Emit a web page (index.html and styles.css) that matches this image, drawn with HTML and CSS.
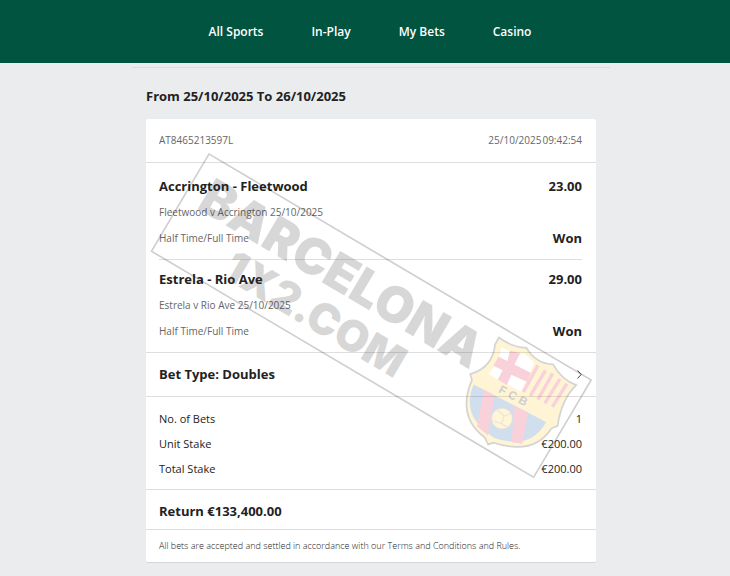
FILE: index.html
```
<!DOCTYPE html>
<html lang="en">
<head>
  <meta charset="utf-8">
  <title>My Bets</title>
  <link rel="stylesheet" href="styles.css">
</head>
<body>
  <header class="header">
    <nav class="nav">
      <a href="#">All Sports</a>
      <a href="#">In-Play</a>
      <a href="#">My Bets</a>
      <a href="#">Casino</a>
    </nav>
  </header>
  <div class="page">
    <main class="content">
      <h1 class="range">From 25/10/2025 To 26/10/2025</h1>
      <section class="slip">
        <div class="row slip-ref">
          <span>AT8465213597L</span>
          <span class="stamp"><span>25/10/2025</span><span>09:42:54</span></span>
        </div>
        <div class="selections">
          <article class="selection">
            <h2 class="row">Accrington - Fleetwood <span>23.00</span></h2>
            <p>Fleetwood v Accrington 25/10/2025</p>
            <p class="row">Half Time/Full Time <strong>Won</strong></p>
          </article>
          <article class="selection">
            <h2 class="row">Estrela - Rio Ave <span>29.00</span></h2>
            <p>Estrela v Rio Ave 25/10/2025</p>
            <p class="row">Half Time/Full Time <strong>Won</strong></p>
          </article>
        </div>
        <button class="row bet-type" type="button">
          Bet Type: Doubles
          <svg width="5" height="9" viewBox="0 0 5 9"><path d="M.5 .5 4.2 4.5 .5 8.5" fill="none" stroke="#444"/></svg>
        </button>
        <dl class="stakes">
          <div class="row"><dt>No. of Bets</dt><dd>1</dd></div>
          <div class="row"><dt>Unit Stake</dt><dd>€200.00</dd></div>
          <div class="row"><dt>Total Stake</dt><dd>€200.00</dd></div>
        </dl>
        <p class="return">Return €133,400.00</p>
        <p class="terms">All bets are accepted and settled in accordance with our Terms and Conditions and Rules.</p>

        <svg class="watermark" width="450" height="443" viewBox="0 0 450 443" aria-hidden="true">
          <g transform="translate(63 35) rotate(30.6)">
            <rect width="444" height="113" fill="none" stroke="#000" stroke-width="1.6"/>
            <text class="mark" x="16" y="53">BARCELONA</text>
            <text class="mark mark-small" x="72" y="99">1X2.COM</text>
          </g>
          <!-- club crest -->
          <g transform="translate(307 204) scale(.345)">
            <path d="M133 42Q170 70 213 72Q240 118 290 120Q315 165 357 180Q315 220 303 298L285 306Q235 385 118 347L102 352L92 332Q10 270 55 165L50 148Q115 130 122 62Z" fill="#fc2" stroke="#222" stroke-width="5"/>
            <path d="M60 178 270 287Q225 370 120 333Q20 270 60 178Z" fill="#15a"/>
            <path d="M89 193 121 210 101 325 70 300ZM178 239 218 260 201 350 170 346Z" fill="#d14"/>
            <path d="M140 70Q175 88 207 88L236 115 197 199 102 148Q135 115 140 70Z" fill="#fff"/>
            <path d="M165 80 195 88 178 120 226 145 214 170 169 150 156 180 130 164 144 137 117 124 132 98 158 110Z" fill="#d14"/>
            <path d="M246 123 204 200M268 137 224 211M289 146 246 222M310 162 266 233M330 176 288 243" fill="none" stroke="#d14" stroke-width="10"/>
            <circle cx="142" cy="277" r="30" fill="#fc3" stroke="#963" stroke-width="2"/>
            <path d="M130 252 148 270 168 262M148 270 141 292 118 284M141 292 157 302" fill="none" stroke="#963" stroke-width="3"/>
            <text class="crest-text" transform="translate(130 200) rotate(28)">F C B</text>
          </g>
        </svg>
      </section>
    </main>
  </div>
</body>
</html>
```
FILE: styles.css
```
* {
  box-sizing: border-box;
}
body {
  margin: 0;
  background-color: #ebecee;
  color: #222;
  font-family: "Segoe UI", "Open Sans", "Noto Sans", sans-serif;
  font-size: 11px;
}
h1, h2, p, dl, dd {
  margin: 0;
}
.header {
  background-color: #005440;
}
.nav {
  display: flex;
  justify-content: center;
  gap: 48px;
  padding: 20px 0;
  margin-left: 10px;
  font-size: 12px;
  line-height: 23px;
}
.nav a {
  color: #fff;
  font-weight: 600;
  text-decoration: none;
}
.page {
  padding: 4px 0 0 12px;
}
.content {
  max-width: 478px;
  margin: 0 auto;
  padding: 0 14px 13px;
  border-top: 1px solid #dcdddf;
}
.range {
  padding: 17px 0 12px;
  font-size: 13px;
  font-weight: 700;
  line-height: 22px;
}
.slip {
  position: relative;
  background-color: #fff;
  border-bottom: 1px solid #d4d5d7;
  border-radius: 2px;
}
.row {
  display: flex;
  justify-content: space-between;
  align-items: center;
}
.slip-ref {
  padding: 10px 14px 10px 13px;
  border-bottom: 1px solid #dedede;
  color: #666;
  font-size: 10px;
  line-height: 23px;
}
.stamp {
  display: flex;
  gap: 1px;
}
.selections {
  padding: 4px 14px 0 13px;
}
.selection {
  padding: 6px 0 8px;
  color: #666;
  font-size: 10px;
  line-height: 26px;
}
.selection + .selection {
  border-top: 1px solid #dedede;
}
.selection h2,
.selection strong {
  color: #222;
  font-size: 13px;
  font-weight: 700;
}
.bet-type {
  width: 100%;
  padding: 10px 14px 10px 13px;
  background: none;
  border: 1px solid #dedede;
  border-width: 1px 0;
  color: #222;
  font-family: inherit;
  font-size: 13px;
  font-weight: 700;
  line-height: 23px;
}
.stakes {
  padding: 9px 14px 8px 13px;
  line-height: 25px;
}
.return {
  padding: 10px 13px 7px;
  border: 1px solid #dedede;
  border-width: 1px 0;
  font-size: 13px;
  font-weight: 700;
  line-height: 22px;
}
.terms {
  padding: 6px 13px;
  color: #222;
  font-size: 9px;
  font-weight: 300;
  line-height: 20px;
}
.watermark {
  position: absolute;
  top: 0;
  left: 0;
  opacity: .19;
  pointer-events: none;
}
.mark {
  fill: #333;
  font-family: Inter, "Liberation Sans", sans-serif;
  font-size: 50px;
  font-weight: 900;
}
.mark-small {
  font-size: 43px;
}
.crest-text {
  font-family: "Liberation Sans", sans-serif;
  font-size: 34px;
  font-weight: bold;
}
```
